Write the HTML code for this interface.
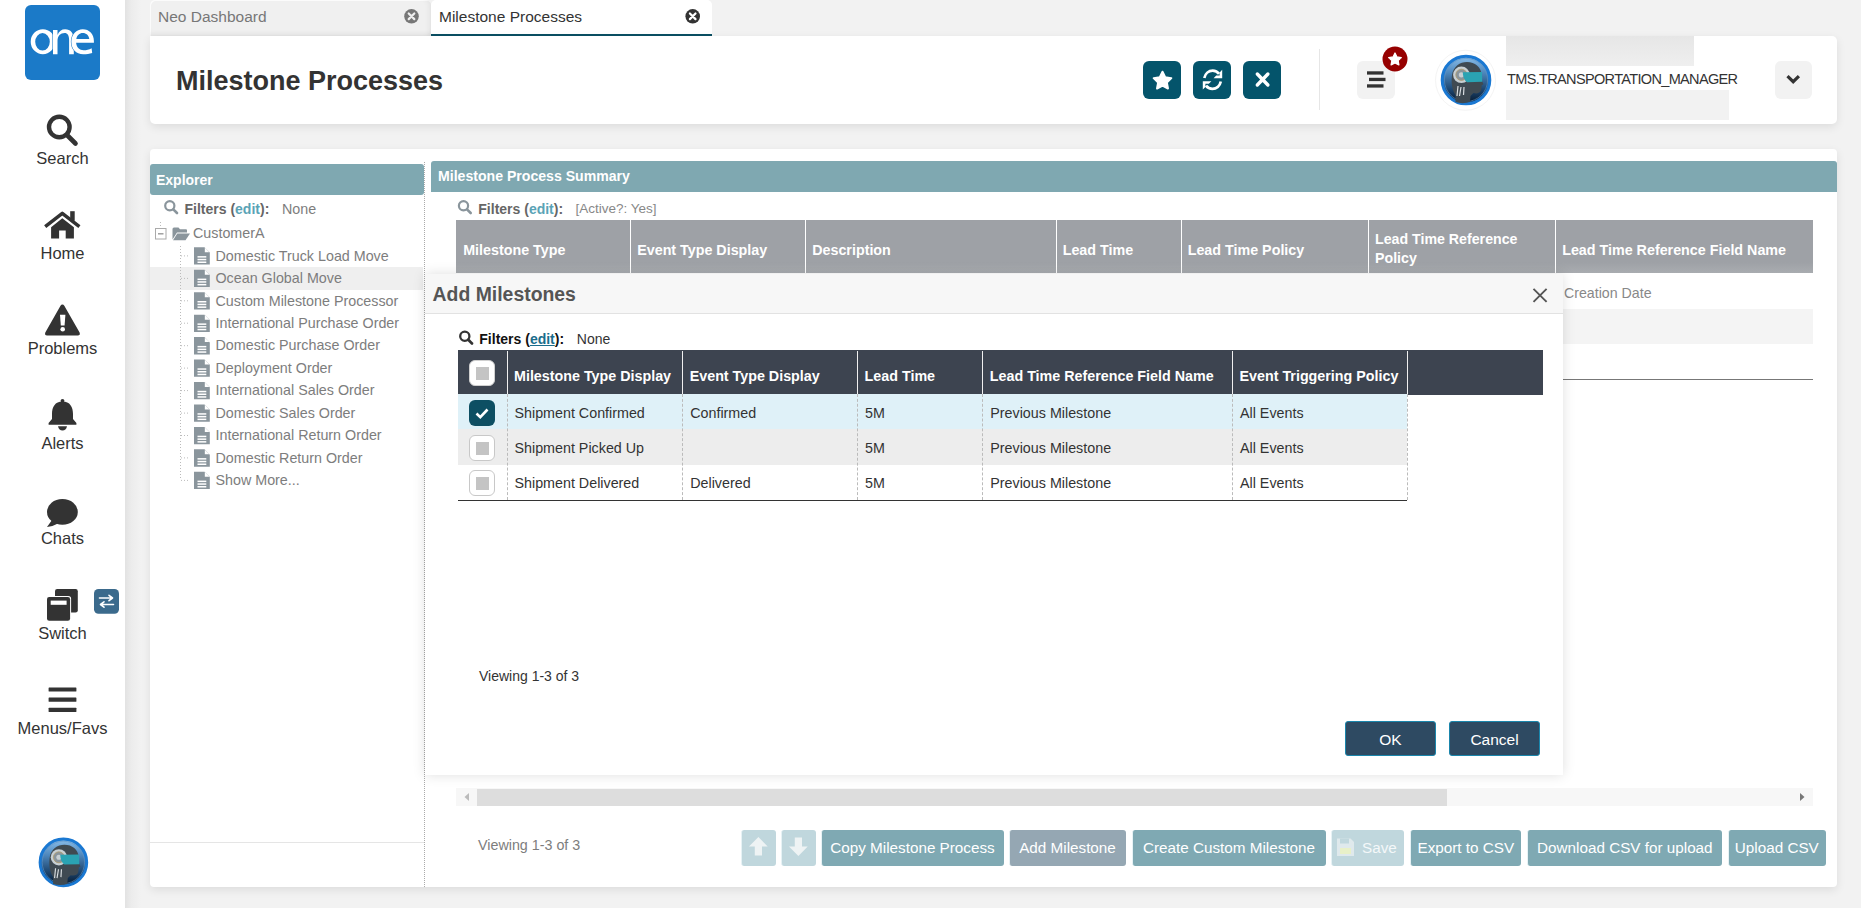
<!DOCTYPE html>
<html><head><meta charset="utf-8">
<style>
*{box-sizing:border-box;margin:0;padding:0}
html,body{width:1861px;height:908px;overflow:hidden;background:#f2f2f2;font-family:"Liberation Sans",sans-serif;color:#333}
.a{position:absolute}
.t{position:absolute;white-space:nowrap;line-height:1}
#side{left:0;top:0;width:125px;height:908px;background:#fff}
#gut{left:125px;top:0;width:16px;height:908px;background:linear-gradient(90deg,#e2e2e2,#ececec 40%,#f2f2f2)}
.lbl{position:absolute;left:0;width:125px;text-align:center;font-size:16.5px;color:#333;line-height:1}
.panel{position:absolute;background:#fff;border-radius:4px;box-shadow:0 3px 10px rgba(0,0,0,.09)}
</style></head><body>
<!-- sidebar -->
<div id="side" class="a"></div>
<div id="gut" class="a"></div>
<div class="a" style="left:25px;top:5px;width:75px;height:75px;background:#1b7ac8;border-radius:6px"></div>


<svg class="a" style="left:0;top:0" width="125" height="908" viewBox="0 0 125 908">
 <g fill="#333">
  <!-- one logo text -->
  <!-- search -->
  <circle cx="59.3" cy="127" r="10.3" fill="none" stroke="#333" stroke-width="4.4"/>
  <line x1="67" y1="135" x2="75.5" y2="143.5" stroke="#333" stroke-width="4.6" stroke-linecap="round"/>
  <!-- home -->
  <polyline points="45.2,226.6 62.3,213.4 79.4,226.6" fill="none" stroke="#333" stroke-width="3.5" stroke-linecap="butt" stroke-linejoin="round"/>
  <rect x="70.2" y="211.2" width="4.5" height="9.5"/>
  <path d="M51.1,227.3 L62.3,218.3 L73.9,227.3 L73.9,238.4 L65.7,238.4 L65.7,230.5 L59.1,230.5 L59.1,238.4 L51.1,238.4 Z"/>
  <!-- problems -->
  <path d="M62.4,304.5 Q63.6,304.5 64.3,305.8 L79.6,332.6 Q80.6,335.5 77.8,335.5 L47.1,335.5 Q44.3,335.5 45.3,332.6 L60.5,305.8 Q61.2,304.5 62.4,304.5 Z"/>
  <path d="M60,314.8 L65.4,314.8 L64.6,325.5 L60.8,325.5 Z" fill="#fff"/>
  <circle cx="62.7" cy="329.3" r="2.3" fill="#fff"/>
  <!-- alerts bell -->
  <circle cx="62.5" cy="400.8" r="1.9"/>
  <path d="M62.5,401.5 C55,401.5 52,407 52,414 L52,419 L48.6,423 L48.6,424.7 L76.4,424.7 L76.4,423 L73,419 L73,414 C73,407 70,401.5 62.5,401.5 Z"/>
  <path d="M58,426.2 L67,426.2 Q66,430.5 62.5,430.5 Q59,430.5 58,426.2 Z"/>
  <!-- chats -->
  <ellipse cx="62.4" cy="511.9" rx="15.4" ry="12.9"/>
  <path d="M52,520 L47,527 Q54,526 59,523 Z"/>
  <!-- switch -->
  <rect x="55" y="589" width="22.8" height="23.5" rx="2.2"/>
  <rect x="46" y="596" width="25.1" height="25.7" rx="2.8" fill="#fff"/>
  <rect x="47" y="597" width="23.1" height="23.7" rx="2.2"/>
  <rect x="50.7" y="600.6" width="15.9" height="4.2" fill="#fff"/>
  <rect x="94" y="589" width="25" height="24.7" rx="4.5" fill="#3b6a8c"/>
  <path d="M99.5,598 L111.5,598 M109,595.3 L112.5,598 L109,600.7 M113.5,604.5 L101.5,604.5 M104,601.8 L100.5,604.5 L104,607.2" fill="none" stroke="#fff" stroke-width="1.6" stroke-linecap="round" stroke-linejoin="round"/>
  <!-- menus -->
  <rect x="48.6" y="687.4" width="27.8" height="4.2" rx="0.5"/>
  <rect x="48.6" y="697.6" width="27.8" height="4.2" rx="0.5"/>
  <rect x="48.6" y="707.8" width="27.8" height="4.2" rx="0.5"/>
 </g>
</svg>
<div class="lbl" style="top:150px">Search</div>
<div class="lbl" style="top:245px">Home</div>
<div class="lbl" style="top:340px">Problems</div>
<div class="lbl" style="top:435px">Alerts</div>
<div class="lbl" style="top:530px">Chats</div>
<div class="lbl" style="top:625px">Switch</div>
<div class="lbl" style="top:720px">Menus/Favs</div>

<svg class="a" style="left:0;top:0" width="125" height="90" viewBox="0 0 125 90">
 <path fill="#fff" fill-rule="evenodd" d="M30.7,41.7 A12.15,12.5 0 1,0 55,41.7 A12.15,12.5 0 1,0 30.7,41.7 Z M35.2,41.8 A7.3,8.7 0 1,0 49.8,41.8 A7.3,8.7 0 1,0 35.2,41.8 Z"/>
 <path fill="#fff" stroke="#1b7ac8" stroke-width="1.1" paint-order="stroke" d="M53,29.9 L57.5,29.9 L57.5,35 C59,31 61.5,29.2 65.2,29.2 C70.6,29.2 73.8,33 73.8,40 L73.8,54.2 L69.1,54.2 L69.1,40 C69.1,35.5 67.5,33.1 64.6,33.1 C60.5,33.1 57.5,36 57.5,41 L57.5,54.2 L53,54.2 Z"/>
 <path fill="#fff" fill-rule="evenodd" stroke="#1b7ac8" stroke-width="1.1" paint-order="stroke" d="M93.9,42.8 L76.1,42.8 C76.6,47.5 79.5,50.3 83.6,50.3 C86.6,50.3 89,49.5 91.6,48.2 L92.2,53 C89.5,53.9 86.6,54.2 83.2,54.2 C76,54.2 71.4,49 71.4,41.7 C71.4,34.2 76.5,29.2 82.7,29.2 C89.3,29.2 93.9,34 93.9,41 Z M76.3,39.1 L89.3,39.1 C88.8,35.3 86.2,33.1 82.8,33.1 C79.3,33.1 76.9,35.5 76.3,39.1 Z"/>
</svg>

<svg width="0" height="0" style="position:absolute">
 <defs>
  <linearGradient id="avg" x1="0" y1="0" x2="0" y2="1">
   <stop offset="0" stop-color="#8cc0ec"/><stop offset="0.35" stop-color="#4d86bb"/><stop offset="0.7" stop-color="#1d4670"/><stop offset="1" stop-color="#04152a"/>
  </linearGradient>
  <symbol id="avatar" viewBox="0 0 60 60">
   <circle cx="30" cy="30" r="23.8" fill="url(#avg)" stroke="#1a78d2" stroke-width="3"/>
   <circle cx="30" cy="30" r="21.6" fill="none" stroke="#5f93c4" stroke-width="1" opacity="0.6"/>
   <path d="M19.5,52 L19.5,45 C15.5,39 15.2,31 16,25 C17.2,16.5 24,12 31,12 C39,12 45,17 45.5,24 L45.5,30 L47.5,34.2 L45.7,35.2 L45.2,40 C44.2,43 41,44 37.5,43 L34.5,46 L34,52 C29,53.5 24,53.5 19.5,52 Z" fill="#3f4a52"/>
   <circle cx="25.4" cy="24.8" r="8.3" fill="#c7cfd3"/>
   <circle cx="25.4" cy="24.8" r="5.6" fill="#8a959c" stroke="#b09a6a" stroke-width="0.8"/>
   <circle cx="25.4" cy="24.8" r="2.6" fill="#c7cfd3"/>
   <path d="M22,36 L21,46 M25,37 L23.5,46 M28,37 L27.5,45" stroke="#d8dde0" stroke-width="1.2"/>
   <path d="M26.8,22.2 L46,22 L46.2,31.8 L31,32.2 C28,30 26.8,26 26.8,22.2 Z" fill="#2aa3b3"/>
  </symbol>
 </defs>
</svg>
<svg class="a" style="left:33.5px;top:832.6px" width="58.8" height="58.8"><use href="#avatar"/></svg>

<!-- tabs -->
<div class="a" style="left:150px;top:0;width:281px;height:36px;background:#f0f0f0;border-radius:5px 5px 0 0;box-shadow:inset 0 -5px 6px -4px rgba(0,0,0,.07),inset -5px 0 6px -4px rgba(0,0,0,.07),inset 1px 1px 0 rgba(255,255,255,.8)"></div>
<div class="t" style="left:158px;top:9px;font-size:15.5px;color:#777">Neo Dashboard</div>
<div class="a" style="left:431px;top:0;width:281px;height:36px;background:#fff;border-radius:5px 5px 0 0;border-bottom:2px solid #0b4f63"></div>
<div class="t" style="left:439px;top:9px;font-size:15.5px;color:#333">Milestone Processes</div>

<!-- header panel -->
<div class="panel" style="left:150px;top:36px;width:1687px;height:88px;border-radius:0 5px 5px 5px"></div>
<div class="t" style="left:176px;top:67.6px;font-size:27px;font-weight:bold;color:#333">Milestone Processes</div>


<!-- tab close icons -->
<svg class="a" style="left:0;top:0" width="760" height="36" viewBox="0 0 760 36">
 <circle cx="411.5" cy="16.3" r="7.3" fill="#777"/>
 <path d="M408.7,13.5 L414.3,19.1 M414.3,13.5 L408.7,19.1" stroke="#efefef" stroke-width="2.2" stroke-linecap="round"/>
 <circle cx="692.7" cy="16.3" r="7.3" fill="#333"/>
 <path d="M689.9,13.5 L695.5,19.1 M695.5,13.5 L689.9,19.1" stroke="#fff" stroke-width="2.2" stroke-linecap="round"/>
</svg>
<!-- header buttons -->
<div class="a" style="left:1143px;top:61px;width:38px;height:38px;background:#04546b;border-radius:6px"></div>
<div class="a" style="left:1193px;top:61px;width:38px;height:38px;background:#04546b;border-radius:6px"></div>
<div class="a" style="left:1243px;top:61px;width:38px;height:38px;background:#04546b;border-radius:6px"></div>
<div class="a" style="left:1318.5px;top:49px;width:1.5px;height:61px;background:#e6e6e6"></div>
<div class="a" style="left:1357px;top:61px;width:38px;height:38px;background:#f2f2f2;border-radius:6px"></div>
<div class="a" style="left:1775px;top:61px;width:37px;height:38px;background:#f2f2f2;border-radius:6px"></div>
<svg class="a" style="left:1100px;top:36px" width="737" height="88" viewBox="1100 36 737 88">
 <path fill="#fff" stroke="#fff" stroke-width="2" stroke-linejoin="round" d="M1162.50,71.70 L1165.20,77.28 L1171.34,78.13 L1166.87,82.42 L1167.97,88.52 L1162.50,85.60 L1157.03,88.52 L1158.13,82.42 L1153.66,78.13 L1159.80,77.28 Z"/>
 <g fill="none" stroke="#fff" stroke-width="2.7">
  <path d="M1204.3,78 C1205.2,73.6 1208.6,70.6 1212.7,70.6 C1215.4,70.6 1217.6,71.8 1219.1,73.9"/>
  <path d="M1220.8,81.6 C1219.9,86 1216.5,88.8 1212.4,88.8 C1209.7,88.8 1207.5,87.6 1206,85.6"/>
 </g>
 <path fill="#fff" d="M1222.2,69.8 L1222.2,78.2 L1213.6,78.2 L1216.2,75.6 L1219.6,75.6 L1219.6,72.4 Z M1202.8,89.6 L1202.8,81.2 L1211.4,81.2 L1208.8,83.8 L1205.4,83.8 L1205.4,87 Z"/>
 <path d="M1257.3,74 L1267.9,85 M1267.9,74 L1257.3,85" stroke="#fff" stroke-width="3.4" stroke-linecap="round"/>
 <rect x="1367" y="71.3" width="16.5" height="3.3" fill="#333"/>
 <rect x="1369" y="77.8" width="16.5" height="3.3" fill="#333"/>
 <rect x="1367" y="84.3" width="16.5" height="3.3" fill="#333"/>
 <circle cx="1395" cy="59" r="12.5" fill="#960000"/>
 <path fill="#fff" stroke="#fff" stroke-width="1.3" stroke-linejoin="round" d="M1395.00,53.00 L1396.94,56.93 L1401.28,57.56 L1398.14,60.62 L1398.88,64.94 L1395.00,62.90 L1391.12,64.94 L1391.86,60.62 L1388.72,57.56 L1393.06,56.93 Z"/>
 <path d="M1787.5,76.2 L1793.2,81.7 L1798.9,76.2" fill="none" stroke="#333" stroke-width="3.2"/>
 <circle cx="1465.5" cy="80.3" r="30" fill="none" stroke="#f4f4f4" stroke-width="1"/>

</svg>
<svg class="a" style="left:1435.6px;top:50.3px" width="60" height="60"><use href="#avatar"/></svg>
<div class="a" style="left:1506px;top:36px;width:188px;height:30px;background:linear-gradient(180deg,#e6e6e6,#efefef)"></div>
<div class="a" style="left:1506px;top:90px;width:223px;height:30px;background:#f2f2f2"></div>
<div class="t" style="left:1507px;top:71.5px;font-size:14.5px;letter-spacing:-0.65px;color:#333">TMS.TRANSPORTATION_MANAGER</div>

<!-- main panel -->
<div class="panel" style="left:150px;top:149px;width:1687px;height:738px"></div>

<div class="a" style="left:150px;top:164px;width:274px;height:31px;background:#7fa8b1;border-radius:3px"></div>
<div class="t" style="left:156px;top:172.8px;font-size:14px;font-weight:bold;color:#fff">Explorer</div>
<div class="a" style="left:424px;top:162px;width:0;height:725px;border-left:1px dotted #aaa"></div>
<div class="a" style="left:150px;top:267px;width:273px;height:23px;background:#efefef"></div>
<div class="a" style="left:150px;top:842px;width:274px;height:1px;background:#e5e5e5"></div>
<div class="t" style="left:184.5px;top:202px;font-size:14px;color:#666"><b>Filters (</b><b style="color:#5aa3b6">edit</b><b>):</b></div>
<div class="t" style="left:282px;top:202px;font-size:14.3px;color:#7d7d7d">None</div>
<div class="t" style="left:193px;top:225.8px;font-size:14.3px;color:#7d7d7d">CustomerA</div>
<svg class="a" style="left:140px;top:190px" width="290" height="310" viewBox="140 190 290 310"><circle cx="169.8" cy="205.8" r="4.6" fill="none" stroke="#8a959c" stroke-width="2.2"/><line x1="173.3" y1="209.3" x2="177" y2="213" stroke="#8a959c" stroke-width="2.6" stroke-linecap="round"/><rect x="155.5" y="228.5" width="10.5" height="10.5" fill="#fff" stroke="#aaa" stroke-width="1"/><line x1="158" y1="233.8" x2="163.5" y2="233.8" stroke="#999" stroke-width="1.4"/><line x1="160.5" y1="222" x2="160.5" y2="228" stroke="#bbb" stroke-width="1" stroke-dasharray="1,2"/><path d="M172.5,229 Q172.5,227.5 174,227.5 L178.5,227.5 L180,229.3 L186,229.3 Q187,229.3 187,230.3 L187,232.5 L177,232.5 L172.5,239.5 Z" fill="#8a959c"/><path d="M177.3,233.5 L190,233.5 L185.5,240.2 L173,240.2 Z" fill="#8a959c"/><line x1="180.5" y1="246" x2="180.5" y2="480" stroke="#bbb" stroke-width="1" stroke-dasharray="1,2"/><line x1="181" y1="255.9" x2="188" y2="255.9" stroke="#bbb" stroke-width="1" stroke-dasharray="1,2"/><path d="M194,247.3 L204.5,247.3 L209.8,252.60000000000002 L209.8,264.6 L194,264.6 Z" fill="#8a959c"/><path d="M204.8,247.60000000000002 L204.8,252.3 L209.5,252.3 Z" fill="#fff"/><rect x="197.5" y="256.1" width="8.8" height="1.5" fill="#fff"/><rect x="197.5" y="258.8" width="8.8" height="1.5" fill="#fff"/><rect x="197.5" y="261.5" width="8.8" height="1.5" fill="#fff"/><line x1="181" y1="278.4" x2="188" y2="278.4" stroke="#bbb" stroke-width="1" stroke-dasharray="1,2"/><path d="M194,269.75 L204.5,269.75 L209.8,275.05 L209.8,287.05 L194,287.05 Z" fill="#8a959c"/><path d="M204.8,270.05 L204.8,274.75 L209.5,274.75 Z" fill="#fff"/><rect x="197.5" y="278.6" width="8.8" height="1.5" fill="#fff"/><rect x="197.5" y="281.2" width="8.8" height="1.5" fill="#fff"/><rect x="197.5" y="283.9" width="8.8" height="1.5" fill="#fff"/><line x1="181" y1="300.8" x2="188" y2="300.8" stroke="#bbb" stroke-width="1" stroke-dasharray="1,2"/><path d="M194,292.2 L204.5,292.2 L209.8,297.5 L209.8,309.5 L194,309.5 Z" fill="#8a959c"/><path d="M204.8,292.5 L204.8,297.2 L209.5,297.2 Z" fill="#fff"/><rect x="197.5" y="301.0" width="8.8" height="1.5" fill="#fff"/><rect x="197.5" y="303.7" width="8.8" height="1.5" fill="#fff"/><rect x="197.5" y="306.4" width="8.8" height="1.5" fill="#fff"/><line x1="181" y1="323.2" x2="188" y2="323.2" stroke="#bbb" stroke-width="1" stroke-dasharray="1,2"/><path d="M194,314.65 L204.5,314.65 L209.8,319.95 L209.8,331.95 L194,331.95 Z" fill="#8a959c"/><path d="M204.8,314.95 L204.8,319.65 L209.5,319.65 Z" fill="#fff"/><rect x="197.5" y="323.4" width="8.8" height="1.5" fill="#fff"/><rect x="197.5" y="326.1" width="8.8" height="1.5" fill="#fff"/><rect x="197.5" y="328.8" width="8.8" height="1.5" fill="#fff"/><line x1="181" y1="345.7" x2="188" y2="345.7" stroke="#bbb" stroke-width="1" stroke-dasharray="1,2"/><path d="M194,337.09999999999997 L204.5,337.09999999999997 L209.8,342.4 L209.8,354.4 L194,354.4 Z" fill="#8a959c"/><path d="M204.8,337.4 L204.8,342.09999999999997 L209.5,342.09999999999997 Z" fill="#fff"/><rect x="197.5" y="345.9" width="8.8" height="1.5" fill="#fff"/><rect x="197.5" y="348.6" width="8.8" height="1.5" fill="#fff"/><rect x="197.5" y="351.3" width="8.8" height="1.5" fill="#fff"/><line x1="181" y1="368.1" x2="188" y2="368.1" stroke="#bbb" stroke-width="1" stroke-dasharray="1,2"/><path d="M194,359.54999999999995 L204.5,359.54999999999995 L209.8,364.84999999999997 L209.8,376.84999999999997 L194,376.84999999999997 Z" fill="#8a959c"/><path d="M204.8,359.84999999999997 L204.8,364.54999999999995 L209.5,364.54999999999995 Z" fill="#fff"/><rect x="197.5" y="368.3" width="8.8" height="1.5" fill="#fff"/><rect x="197.5" y="371.0" width="8.8" height="1.5" fill="#fff"/><rect x="197.5" y="373.7" width="8.8" height="1.5" fill="#fff"/><line x1="181" y1="390.6" x2="188" y2="390.6" stroke="#bbb" stroke-width="1" stroke-dasharray="1,2"/><path d="M194,382.0 L204.5,382.0 L209.8,387.3 L209.8,399.3 L194,399.3 Z" fill="#8a959c"/><path d="M204.8,382.3 L204.8,387.0 L209.5,387.0 Z" fill="#fff"/><rect x="197.5" y="390.8" width="8.8" height="1.5" fill="#fff"/><rect x="197.5" y="393.5" width="8.8" height="1.5" fill="#fff"/><rect x="197.5" y="396.2" width="8.8" height="1.5" fill="#fff"/><line x1="181" y1="413.1" x2="188" y2="413.1" stroke="#bbb" stroke-width="1" stroke-dasharray="1,2"/><path d="M194,404.45 L204.5,404.45 L209.8,409.75 L209.8,421.75 L194,421.75 Z" fill="#8a959c"/><path d="M204.8,404.75 L204.8,409.45 L209.5,409.45 Z" fill="#fff"/><rect x="197.5" y="413.2" width="8.8" height="1.5" fill="#fff"/><rect x="197.5" y="415.9" width="8.8" height="1.5" fill="#fff"/><rect x="197.5" y="418.6" width="8.8" height="1.5" fill="#fff"/><line x1="181" y1="435.5" x2="188" y2="435.5" stroke="#bbb" stroke-width="1" stroke-dasharray="1,2"/><path d="M194,426.9 L204.5,426.9 L209.8,432.2 L209.8,444.2 L194,444.2 Z" fill="#8a959c"/><path d="M204.8,427.2 L204.8,431.9 L209.5,431.9 Z" fill="#fff"/><rect x="197.5" y="435.7" width="8.8" height="1.5" fill="#fff"/><rect x="197.5" y="438.4" width="8.8" height="1.5" fill="#fff"/><rect x="197.5" y="441.1" width="8.8" height="1.5" fill="#fff"/><line x1="181" y1="457.9" x2="188" y2="457.9" stroke="#bbb" stroke-width="1" stroke-dasharray="1,2"/><path d="M194,449.34999999999997 L204.5,449.34999999999997 L209.8,454.65 L209.8,466.65 L194,466.65 Z" fill="#8a959c"/><path d="M204.8,449.65 L204.8,454.34999999999997 L209.5,454.34999999999997 Z" fill="#fff"/><rect x="197.5" y="458.1" width="8.8" height="1.5" fill="#fff"/><rect x="197.5" y="460.8" width="8.8" height="1.5" fill="#fff"/><rect x="197.5" y="463.5" width="8.8" height="1.5" fill="#fff"/><line x1="181" y1="480.4" x2="188" y2="480.4" stroke="#bbb" stroke-width="1" stroke-dasharray="1,2"/><path d="M194,471.79999999999995 L204.5,471.79999999999995 L209.8,477.09999999999997 L209.8,489.09999999999997 L194,489.09999999999997 Z" fill="#8a959c"/><path d="M204.8,472.09999999999997 L204.8,476.79999999999995 L209.5,476.79999999999995 Z" fill="#fff"/><rect x="197.5" y="480.6" width="8.8" height="1.5" fill="#fff"/><rect x="197.5" y="483.3" width="8.8" height="1.5" fill="#fff"/><rect x="197.5" y="486.0" width="8.8" height="1.5" fill="#fff"/></svg>
<div class="t" style="left:215.5px;top:248.6px;font-size:14.3px;color:#7d7d7d">Domestic Truck Load Move</div>
<div class="t" style="left:215.5px;top:271.1px;font-size:14.3px;color:#7d7d7d">Ocean Global Move</div>
<div class="t" style="left:215.5px;top:293.5px;font-size:14.3px;color:#7d7d7d">Custom Milestone Processor</div>
<div class="t" style="left:215.5px;top:315.9px;font-size:14.3px;color:#7d7d7d">International Purchase Order</div>
<div class="t" style="left:215.5px;top:338.4px;font-size:14.3px;color:#7d7d7d">Domestic Purchase Order</div>
<div class="t" style="left:215.5px;top:360.8px;font-size:14.3px;color:#7d7d7d">Deployment Order</div>
<div class="t" style="left:215.5px;top:383.3px;font-size:14.3px;color:#7d7d7d">International Sales Order</div>
<div class="t" style="left:215.5px;top:405.8px;font-size:14.3px;color:#7d7d7d">Domestic Sales Order</div>
<div class="t" style="left:215.5px;top:428.2px;font-size:14.3px;color:#7d7d7d">International Return Order</div>
<div class="t" style="left:215.5px;top:450.6px;font-size:14.3px;color:#7d7d7d">Domestic Return Order</div>
<div class="t" style="left:215.5px;top:473.1px;font-size:14.3px;color:#7d7d7d">Show More...</div>
<div class="a" style="left:431px;top:161px;width:1406px;height:31px;background:#7fa8b1;border-radius:3px 3px 0 0"></div>
<div class="t" style="left:438px;top:169px;font-size:14.1px;font-weight:bold;color:#fff">Milestone Process Summary</div>
<svg class="a" style="left:450px;top:195px" width="30" height="25" viewBox="450 195 30 25"><circle cx="463.5" cy="205.8" r="4.6" fill="none" stroke="#8a959c" stroke-width="2.2"/><line x1="467.0" y1="209.3" x2="470.7" y2="213" stroke="#8a959c" stroke-width="2.6" stroke-linecap="round"/></svg>
<div class="t" style="left:478.3px;top:202px;font-size:14px;color:#666"><b>Filters (</b><b style="color:#5aa3b6">edit</b><b>):</b></div>
<div class="t" style="left:575.4px;top:202px;font-size:13.5px;color:#888">[Active?: Yes]</div>
<div class="a" style="left:456px;top:220px;width:1357px;height:53px;background:linear-gradient(180deg,#9ea1a6 0%,#9ea1a6 80%,#a9acb0 100%)"></div>
<div class="a" style="left:630px;top:220px;width:1px;height:53px;background:#fff"></div>
<div class="a" style="left:805px;top:220px;width:1px;height:53px;background:#fff"></div>
<div class="a" style="left:1055.5px;top:220px;width:1px;height:53px;background:#fff"></div>
<div class="a" style="left:1180.5px;top:220px;width:1px;height:53px;background:#fff"></div>
<div class="a" style="left:1368px;top:220px;width:1px;height:53px;background:#fff"></div>
<div class="a" style="left:1555px;top:220px;width:1px;height:53px;background:#fff"></div>
<div class="t" style="left:463.2px;top:243px;font-size:14.3px;font-weight:bold;color:#fff">Milestone Type</div>
<div class="t" style="left:637.2px;top:243px;font-size:14.3px;font-weight:bold;color:#fff">Event Type Display</div>
<div class="t" style="left:812.2px;top:243px;font-size:14.3px;font-weight:bold;color:#fff">Description</div>
<div class="t" style="left:1062.7px;top:243px;font-size:14.3px;font-weight:bold;color:#fff">Lead Time</div>
<div class="t" style="left:1187.7px;top:243px;font-size:14.3px;font-weight:bold;color:#fff">Lead Time Policy</div>
<div class="t" style="left:1375px;top:232px;font-size:14.2px;font-weight:bold;color:#fff">Lead Time Reference</div>
<div class="t" style="left:1375px;top:250.5px;font-size:14.2px;font-weight:bold;color:#fff">Policy</div>
<div class="t" style="left:1562.2px;top:243px;font-size:14.3px;font-weight:bold;color:#fff">Lead Time Reference Field Name</div>
<div class="a" style="left:456px;top:309px;width:1357px;height:34.5px;background:#f4f4f4"></div>
<div class="a" style="left:456px;top:379px;width:1357px;height:1px;background:#777"></div>
<div class="t" style="left:1564px;top:285.5px;font-size:14.2px;color:#888">Creation Date</div>
<div class="a" style="left:456px;top:788px;width:1357px;height:18px;background:#f7f7f7"></div>
<div class="a" style="left:477px;top:789px;width:970px;height:17px;background:#dddddd"></div>
<svg class="a" style="left:456px;top:788px" width="1357" height="18" viewBox="456 788 1357 18"><path d="M469,793 L469,801 L464.5,797 Z" fill="#bbb"/><path d="M1800,793 L1800,801 L1804.5,797 Z" fill="#777"/></svg>
<div class="t" style="left:478px;top:837.5px;font-size:14.3px;color:#7d7d7d">Viewing 1-3 of 3</div>
<div class="a" style="left:741px;top:829.5px;width:34.5px;height:36px;background:#c0d7dd;border-radius:3px;border-left:1.5px solid #e6f2f5"></div>
<div class="a" style="left:781px;top:829.5px;width:34.7px;height:36px;background:#c0d7dd;border-radius:3px;border-left:1.5px solid #e6f2f5"></div>
<div class="a" style="left:821.2px;top:829.5px;width:182.6px;height:36px;background:#7fa9b3;border-radius:3px;border-left:1.5px solid #e6f2f5"></div>
<div class="t" style="left:821.2px;width:182.6px;text-align:center;top:840px;font-size:15.25px;color:#fff">Copy Milestone Process</div>
<div class="a" style="left:1009px;top:829.5px;width:117.0px;height:36px;background:#95a7b3;border-radius:3px;border-left:1.5px solid #e6f2f5"></div>
<div class="t" style="left:1009px;width:117.0px;text-align:center;top:840px;font-size:15.25px;color:#fff">Add Milestone</div>
<div class="a" style="left:1132px;top:829.5px;width:194.0px;height:36px;background:#7fa9b3;border-radius:3px;border-left:1.5px solid #e6f2f5"></div>
<div class="t" style="left:1132px;width:194.0px;text-align:center;top:840px;font-size:15.25px;color:#fff">Create Custom Milestone</div>
<div class="a" style="left:1331px;top:829.5px;width:73.0px;height:36px;background:#c0d7dd;border-radius:3px;border-left:1.5px solid #e6f2f5"></div>
<div class="a" style="left:1410.3px;top:829.5px;width:111.1px;height:36px;background:#7fa9b3;border-radius:3px;border-left:1.5px solid #e6f2f5"></div>
<div class="t" style="left:1410.3px;width:111.1px;text-align:center;top:840px;font-size:15.25px;color:#fff">Export to CSV</div>
<div class="a" style="left:1527.3px;top:829.5px;width:195.1px;height:36px;background:#7fa9b3;border-radius:3px;border-left:1.5px solid #e6f2f5"></div>
<div class="t" style="left:1527.3px;width:195.1px;text-align:center;top:840px;font-size:15.25px;color:#fff">Download CSV for upload</div>
<div class="a" style="left:1728px;top:829.5px;width:97.6px;height:36px;background:#7fa9b3;border-radius:3px;border-left:1.5px solid #e6f2f5"></div>
<div class="t" style="left:1728px;width:97.6px;text-align:center;top:840px;font-size:15.25px;color:#fff">Upload CSV</div>
<svg class="a" style="left:730px;top:825px" width="700" height="45" viewBox="730 825 700 45"><path d="M758.4,837 L767.7,846.5 L762,846.5 L762,855.5 L754.8,855.5 L754.8,846.5 L749,846.5 Z" fill="#eef3f4"/><path d="M798.4,856 L807.7,846.5 L802,846.5 L802,837.5 L794.8,837.5 L794.8,846.5 L789,846.5 Z" fill="#eef3f4"/><path d="M1337,838.5 L1350.5,838.5 L1354,842 L1354,856 L1337,856 Z" fill="#dfe9ec"/><rect x="1340" y="838.5" width="9" height="5" fill="#c0d7dd"/><rect x="1340" y="848" width="11" height="6" fill="#e8f0c8"/></svg>
<div class="t" style="left:1362px;top:840px;font-size:15.25px;color:#f4f8f9">Save</div>
<div class="a" style="left:425px;top:274px;width:1138px;height:501px;background:#fff;box-shadow:0 0 12px rgba(0,0,0,.13)"></div>
<div class="a" style="left:425px;top:274px;width:1138px;height:40px;background:#f7f7f7;border-bottom:1px solid #e2e2e2"></div>
<div class="t" style="left:432.6px;top:284.6px;font-size:19.4px;font-weight:bold;color:#555">Add Milestones</div>
<svg class="a" style="left:1520px;top:280px" width="40" height="30" viewBox="1520 280 40 30"><path d="M1533.5,288.8 L1546.6,301.9 M1546.6,288.8 L1533.5,301.9" stroke="#555" stroke-width="1.9"/></svg>
<svg class="a" style="left:450px;top:325px" width="30" height="25" viewBox="450 325 30 25"><circle cx="464.8" cy="336.3" r="4.6" fill="none" stroke="#333" stroke-width="2.3"/><line x1="468.3" y1="339.8" x2="472" y2="343.5" stroke="#333" stroke-width="2.6999999999999997" stroke-linecap="round"/></svg>
<div class="t" style="left:479.3px;top:332px;font-size:14px;color:#111"><b>Filters (</b><b style="color:#1a6d8c;text-decoration:underline">edit</b><b>):</b></div>
<div class="t" style="left:576.8px;top:332px;font-size:14px;color:#333">None</div>
<div class="a" style="left:458px;top:350px;width:1085px;height:45px;background:#3d4450"></div>
<div class="a" style="left:507px;top:351px;width:1px;height:43px;background:#f0f0f0"></div>
<div class="a" style="left:682px;top:351px;width:1px;height:43px;background:#f0f0f0"></div>
<div class="a" style="left:857px;top:351px;width:1px;height:43px;background:#f0f0f0"></div>
<div class="a" style="left:982px;top:351px;width:1px;height:43px;background:#f0f0f0"></div>
<div class="a" style="left:1232px;top:351px;width:1px;height:43px;background:#f0f0f0"></div>
<div class="a" style="left:1407px;top:351px;width:1px;height:43px;background:#f0f0f0"></div>
<div class="t" style="left:514px;top:369.2px;font-size:14.3px;font-weight:bold;color:#fff">Milestone Type Display</div>
<div class="t" style="left:689.7px;top:369.2px;font-size:14.3px;font-weight:bold;color:#fff">Event Type Display</div>
<div class="t" style="left:864.6px;top:369.2px;font-size:14.3px;font-weight:bold;color:#fff">Lead Time</div>
<div class="t" style="left:989.8px;top:369.2px;font-size:14.3px;font-weight:bold;color:#fff">Lead Time Reference Field Name</div>
<div class="t" style="left:1239.5px;top:369.2px;font-size:14.3px;font-weight:bold;color:#fff">Event Triggering Policy</div>
<div class="a" style="left:458px;top:394px;width:949.4px;height:35.3px;background:#dff1f8"></div>
<div class="t" style="left:514.5px;top:405.9px;font-size:14.3px;color:#333">Shipment Confirmed</div>
<div class="t" style="left:690.2px;top:405.9px;font-size:14.3px;color:#333">Confirmed</div>
<div class="t" style="left:865.1px;top:405.9px;font-size:14.3px;color:#333">5M</div>
<div class="t" style="left:990.3px;top:405.9px;font-size:14.3px;color:#333">Previous Milestone</div>
<div class="t" style="left:1240.0px;top:405.9px;font-size:14.3px;color:#333">All Events</div>
<div class="a" style="left:458px;top:429.4px;width:949.4px;height:35.3px;background:#ededed"></div>
<div class="t" style="left:514.5px;top:441.3px;font-size:14.3px;color:#333">Shipment Picked Up</div>
<div class="t" style="left:865.1px;top:441.3px;font-size:14.3px;color:#333">5M</div>
<div class="t" style="left:990.3px;top:441.3px;font-size:14.3px;color:#333">Previous Milestone</div>
<div class="t" style="left:1240.0px;top:441.3px;font-size:14.3px;color:#333">All Events</div>
<div class="a" style="left:458px;top:464.6px;width:949.4px;height:35.3px;background:#ffffff"></div>
<div class="t" style="left:514.5px;top:475.8px;font-size:14.3px;color:#333">Shipment Delivered</div>
<div class="t" style="left:690.2px;top:475.8px;font-size:14.3px;color:#333">Delivered</div>
<div class="t" style="left:865.1px;top:475.8px;font-size:14.3px;color:#333">5M</div>
<div class="t" style="left:990.3px;top:475.8px;font-size:14.3px;color:#333">Previous Milestone</div>
<div class="t" style="left:1240.0px;top:475.8px;font-size:14.3px;color:#333">All Events</div>
<div class="a" style="left:507px;top:394px;width:0;height:106px;border-left:1px dashed #bbb"></div>
<div class="a" style="left:682px;top:394px;width:0;height:106px;border-left:1px dashed #bbb"></div>
<div class="a" style="left:857px;top:394px;width:0;height:106px;border-left:1px dashed #bbb"></div>
<div class="a" style="left:982px;top:394px;width:0;height:106px;border-left:1px dashed #bbb"></div>
<div class="a" style="left:1232px;top:394px;width:0;height:106px;border-left:1px dashed #bbb"></div>
<div class="a" style="left:1407px;top:394px;width:0;height:106px;border-left:1px dashed #bbb"></div>
<div class="a" style="left:458px;top:499.5px;width:949.4px;height:1.5px;background:#333"></div>
<div class="a" style="left:469px;top:360px;width:26px;height:26px;background:#fff;border:1px solid #d0d0d0;border-radius:6px"></div><div class="a" style="left:475.5px;top:366.8px;width:13px;height:13px;background:#c4c4c4"></div>
<div class="a" style="left:469px;top:400px;width:26px;height:26px;background:#0d4f63;border-radius:6px"></div>
<svg class="a" style="left:469px;top:400px" width="26" height="26" viewBox="0 0 26 26"><path d="M7.5,13.5 L11.3,17.2 L18.5,9.5" fill="none" stroke="#fff" stroke-width="2.6"/></svg>
<div class="a" style="left:469px;top:435.2px;width:26px;height:26px;background:#fff;border:1.3px solid #c8c8c8;border-radius:6px"></div><div class="a" style="left:475.5px;top:441.7px;width:13px;height:13px;background:#c4c4c4"></div>
<div class="a" style="left:469px;top:470.4px;width:26px;height:26px;background:#fff;border:1.3px solid #c8c8c8;border-radius:6px"></div><div class="a" style="left:475.5px;top:476.9px;width:13px;height:13px;background:#c4c4c4"></div>
<div class="t" style="left:479px;top:668.5px;font-size:14px;color:#333">Viewing 1-3 of 3</div>
<div class="a" style="left:1345px;top:721px;width:91px;height:35px;background:#2e4a62;border:1px solid #1a86ac;border-radius:3px"></div>
<div class="a" style="left:1449px;top:721px;width:91px;height:35px;background:#2e4a62;border:1px solid #1a86ac;border-radius:3px"></div>
<div class="t" style="left:1345px;width:91px;text-align:center;top:731.5px;font-size:15.5px;color:#fff">OK</div>
<div class="t" style="left:1449px;width:91px;text-align:center;top:731.5px;font-size:15.5px;color:#fff">Cancel</div>
</body></html>
